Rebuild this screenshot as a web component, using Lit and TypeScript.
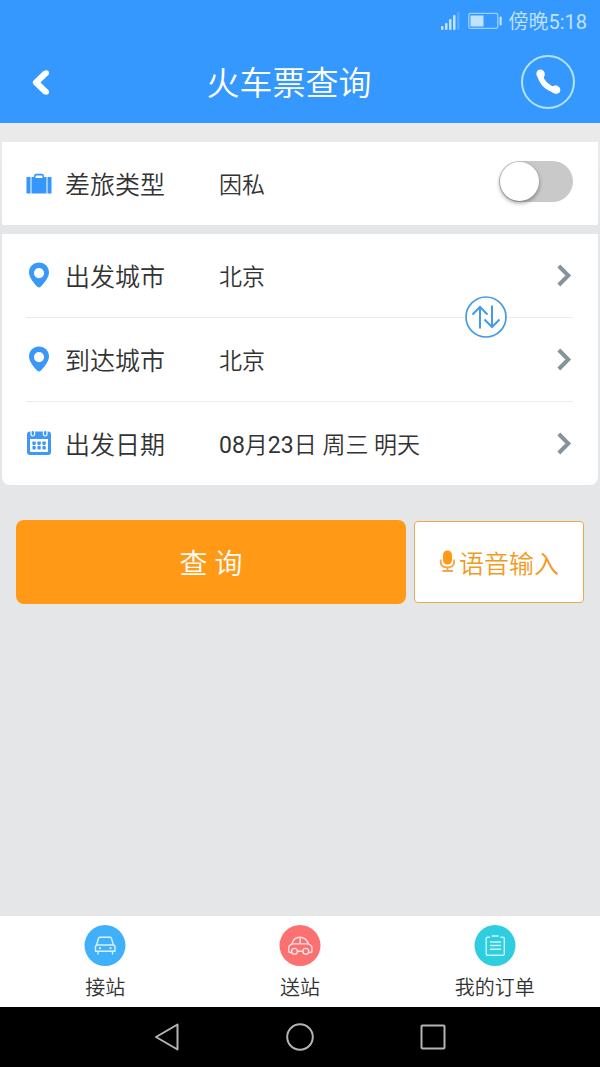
import { LitElement, html, css, svg } from "lit";
import { customElement, property, state } from "lit/decorators.js";

const icons: Record<string, unknown> = {
  bag: svg`
    <g fill="#3596fb">
      <rect x="0.500" y="6" width="4" height="16.500" rx="0.500"/>
      <rect x="21.500" y="6" width="4" height="16.500" rx="0.500"/>
      <path fill-rule="evenodd" d="M5.500 6H8V5Q8 2.800 10.200 2.800H15.800Q18 2.800 18 5V6H20.500V22.500H5.500ZM9.500 7H16.500V5.600Q16.500 4.600 15.500 4.600H10.500Q9.500 4.600 9.500 5.600Z"/>
    </g>`,
  pin: svg`
    <path fill="#3a98f8" fill-rule="evenodd" d="M13 0.500C7.400 0.500 3 4.800 3 10.300C3 16.200 8.400 21.600 11.300 24.800Q13 26.400 14.700 24.800C17.600 21.600 23 16.200 23 10.300C23 4.800 18.600 0.500 13 0.500ZM13 6A5.100 5.100 0 1 1 13 16.200A5.100 5.100 0 1 1 13 6Z"/>`,
  calendar: svg`
    <rect x="1" y="1.500" width="24" height="23.500" rx="3" fill="#3f98f5"/>
    <path d="M4 9H22V21Q22 22 21 22H5Q4 22 4 21Z" fill="#fff"/>
    <g fill="#3f98f5" stroke="#fff" stroke-width="1.200">
      <rect x="5" y="0.500" width="3.600" height="5.500" rx="1.800"/>
      <rect x="17.400" y="0.500" width="3.600" height="5.500" rx="1.800"/>
    </g>
    <g fill="#3f98f5">
      ${[6.4, 11.4, 16.4].map((x) =>
        [11.5, 16].map(
          (y) => svg`<rect x=${x} y=${y} width="3.400" height="3.400" rx="0.800"/>`
        )
      )}
    </g>`,
};

@customElement("status-bar")
class StatusBar extends LitElement {
  static styles = css`
    :host {
      display: flex;
      align-items: center;
      justify-content: flex-end;
      gap: 6px;
      height: 41px;
      padding-right: 13px;
      box-sizing: border-box;
      color: #c0e3ff;
      font-size: 20px;
      line-height: 24px;
    }
    .signal { margin-right: 2px; }
    .time { padding-top: 2px; }
  `;
  render() {
    return html`
      <svg class="signal" width="20" height="20" viewBox="0 0 20 20" aria-hidden="true">
        <g fill="#c0e3ff">
          <rect x="1" y="15" width="2.500" height="4" rx="1"/>
          <rect x="5" y="12" width="2.500" height="7" rx="1"/>
          <rect x="9" y="8" width="2.500" height="11" rx="1"/>
          <rect x="13" y="4" width="2.500" height="15" rx="1"/>
          <rect x="17" y="1" width="2.500" height="18" rx="1" opacity="0.250"/>
        </g>
      </svg>
      <svg width="34" height="18" viewBox="0 0 34 18" aria-hidden="true">
        <rect x="0.800" y="1.300" width="29" height="15" rx="1.500" fill="none" stroke="#9bd0ff" stroke-width="1.300"/>
        <rect x="2.500" y="3.500" width="13" height="11" fill="#c0e3ff"/>
        <rect x="31.500" y="4.500" width="2.200" height="9" rx="1" fill="#c0e3ff"/>
      </svg>
      <span class="time">傍晚5:18</span>
    `;
  }
}

@customElement("form-row")
class FormRow extends LitElement {
  @property() icon = "";
  @property() label = "";
  @property() value = "";
  static styles = css`
    :host { display: block; padding: 0 25px 0 24px; }
    .row {
      display: flex;
      align-items: center;
      width: 100%;
      height: 83px;
      padding: 0;
      border: 0;
      background: none;
      color: #333;
      font: inherit;
      text-align: left;
      cursor: pointer;
    }
    .icon { flex: none; margin: 0 13px 2px 0; }
    .label { width: 154px; padding-top: 4px; font-size: 25px; line-height: 36px; }
    .value { flex: 1; padding-top: 4px; font-size: 23px; line-height: 36px; }
    .chevron { flex: none; }
  `;
  render() {
    return html`
      <button class="row" type="button">
        <svg class="icon" width="26" height="26" viewBox="0 0 26 26" aria-hidden="true">${icons[this.icon]}</svg>
        <span class="label">${this.label}</span>
        <span class="value">${this.value}</span>
        <svg class="chevron" width="16" height="24" viewBox="0 0 16 24" aria-hidden="true">
          <path d="M1.800 2L11.300 11.500L1.800 21" fill="none" stroke="#85939c" stroke-width="4"/>
        </svg>
      </button>
    `;
  }
}

@customElement("app-root")
class AppRoot extends LitElement {
  @state() private business = false;
  @state() private from = "北京";
  @state() private to = "北京";

  static styles = css`
    :host {
      display: flex;
      flex-direction: column;
      min-height: 100vh;
      background: linear-gradient(#eaeaea 140px, #e5e6e8 230px);
      color: #333;
      font-family: Roboto, "Noto Sans CJK SC DemiLight", "Noto Sans CJK SC", sans-serif;
    }
    button { font-family: inherit; cursor: pointer; }
    .top { background: #3498ff; }
    .header {
      display: flex;
      align-items: center;
      justify-content: space-between;
      height: 82px;
      padding: 0 25px;
    }
    .back {
      display: flex;
      padding: 0 6px;
      border: 0;
      background: none;
    }
    .title {
      margin: 0;
      padding-top: 4px;
      color: #fff;
      font-size: 33px;
      line-height: 48px;
      font-weight: 350;
    }
    .call {
      display: flex;
      align-items: center;
      justify-content: center;
      width: 54px;
      height: 54px;
      padding: 0;
      box-sizing: border-box;
      border: 2px solid #b5e4ff;
      border-radius: 50%;
      background: none;
    }
    .main { flex: 1; padding-top: 19px; }
    .card { position: relative; margin: 0 2px 9px; background: #fff; }
    .trip { border-radius: 0 0 8px 8px; }
    .type {
      display: flex;
      align-items: center;
      height: 83px;
      padding: 0 25px 0 24px;
    }
    .type-icon { flex: none; margin-right: 13px; }
    .type-label { width: 154px; padding-top: 4px; font-size: 25px; line-height: 36px; }
    .type-value { flex: 1; padding-top: 4px; font-size: 23px; line-height: 36px; }
    .switch {
      appearance: none;
      display: flex;
      flex: none;
      width: 74px;
      height: 41px;
      margin: 0 0 4px;
      border-radius: 21px;
      background: #c9c9c9;
      cursor: pointer;
    }
    .switch::before {
      content: "";
      width: 39px;
      height: 39px;
      margin: 1px;
      border-radius: 50%;
      background: #fff;
      box-shadow: 0 2px 4px rgba(0, 0, 0, 0.4);
    }
    .switch:checked { justify-content: flex-end; background: #3498ff; }
    .line { height: 1px; margin: 0 25px 0 24px; border: 0; background: #ebebeb; }
    .swap {
      position: absolute;
      top: 62px;
      right: 91px;
      display: flex;
      width: 42px;
      height: 42px;
      padding: 0;
      border: 0;
      border-radius: 50%;
      background: #fff;
    }
    .actions {
      display: flex;
      align-items: center;
      gap: 8px;
      padding: 26px 16px 0;
    }
    .search {
      flex: 1;
      height: 84px;
      border: 0;
      border-radius: 8px;
      background: #ff9916;
      color: #fff;
      font-size: 28px;
    }
    .voice {
      display: flex;
      align-items: center;
      justify-content: center;
      gap: 4px;
      width: 170px;
      height: 82px;
      padding: 0;
      border: 1px solid #eba850;
      border-radius: 4px;
      background: #fff;
      color: #f29a20;
      font-size: 25px;
    }
    .tabs { display: flex; height: 91px; padding: 0 8px; background: #fff; }
    .tab {
      display: flex;
      flex: 1;
      flex-direction: column;
      align-items: center;
      gap: 7px;
      padding-top: 8px;
      color: #333;
      font-size: 20px;
      line-height: 30px;
      text-decoration: none;
    }
    .system { display: flex; height: 60px; padding: 0 100px; background: #000; }
    .key {
      display: flex;
      flex: 1;
      align-items: center;
      justify-content: center;
      padding: 0;
      border: 0;
      background: none;
    }
  `;

  private swap() {
    [this.from, this.to] = [this.to, this.from];
  }

  render() {
    return html`
      <div class="top">
        <status-bar></status-bar>
        <header class="header">
          <button class="back" type="button" aria-label="返回">
            <svg width="20" height="28" viewBox="0 0 20 28" aria-hidden="true">
              <path d="M14.800 5L5 14.500L14.800 24" fill="none" stroke="#fff" stroke-width="6.200" stroke-linejoin="round" stroke-linecap="butt"/>
              <circle cx="15.200" cy="5" r="2.800" fill="#fff"/>
              <circle cx="15.200" cy="24" r="2.800" fill="#fff"/>
            </svg>
          </button>
          <h1 class="title">火车票查询</h1>
          <button class="call" type="button" aria-label="电话">
            <svg width="28" height="28" viewBox="0 0 28 28" aria-hidden="true">
              <path d="M6 6.500C7 14 13.500 20.500 21.500 22" fill="none" stroke="#fff" stroke-width="5.600"/>
              <ellipse cx="6.600" cy="6" rx="4.200" ry="4.600" transform="rotate(-20 6.600 6)" fill="#fff"/>
              <ellipse cx="21.800" cy="21.600" rx="4.600" ry="4.200" transform="rotate(20 21.800 21.600)" fill="#fff"/>
            </svg>
          </button>
        </header>
      </div>

      <main class="main">
        <section class="card type">
          <svg class="type-icon" width="26" height="26" viewBox="0 0 26 26" aria-hidden="true">${icons.bag}</svg>
          <label class="type-label" for="type">差旅类型</label>
          <span class="type-value">${this.business ? "因公" : "因私"}</span>
          <input class="switch" id="type" type="checkbox" .checked=${this.business}
            @change=${(e: Event) => (this.business = (e.target as HTMLInputElement).checked)}>
        </section>

        <section class="card trip">
          <form-row icon="pin" label="出发城市" .value=${this.from}></form-row>
          <hr class="line">
          <form-row icon="pin" label="到达城市" .value=${this.to}></form-row>
          <hr class="line">
          <form-row icon="calendar" label="出发日期" value="08月23日 周三 明天"></form-row>
          <button class="swap" type="button" aria-label="交换城市" @click=${this.swap}>
            <svg width="42" height="42" viewBox="0 0 42 42" aria-hidden="true">
              <g fill="none" stroke="#459be8" stroke-width="2">
                <circle cx="21" cy="21" r="20" stroke-width="1.700"/>
                <path d="M15 32.500V11.500M7.500 18.500L15 11L22.500 18.500"/>
                <path d="M27 9.500V31M19.500 23.500L27 31L34.500 23.500"/>
              </g>
            </svg>
          </button>
        </section>

        <div class="actions">
          <button class="search" type="button">查 询</button>
          <button class="voice" type="button">
            <svg width="16" height="24" viewBox="0 0 16 24" aria-hidden="true">
              <rect x="4" y="0.500" width="9" height="14" rx="4.500" fill="#ff9916"/>
              <path d="M1.700 9.500V11.500Q1.700 17.500 8.500 17.500Q15.200 17.500 15.200 11.500V9.500M8.500 17.500V21M3.500 21H14" fill="none" stroke="#f0a848" stroke-width="1.800"/>
            </svg>
            <span>语音输入</span>
          </button>
        </div>
      </main>

      <nav class="tabs">
        <a class="tab" href="#pickup">
          <svg width="42" height="42" viewBox="0 0 42 42" aria-hidden="true">
            <circle cx="21" cy="21.500" r="20.500" fill="#41b0fa"/>
            <g fill="none" stroke="#d9f1ff" stroke-width="1.400" stroke-linejoin="round" stroke-linecap="round">
              <path d="M12.500 21L14.600 14.300Q15 13.300 16 13.300H26Q27 13.300 27.400 14.300L29.500 21"/>
              <path d="M11.500 23Q11.500 21 13.500 21H29Q31 21 31 23V27.300H11.500Z"/>
              <path d="M14 27.500V30M28.500 27.500V30"/>
            </g>
            <circle cx="16" cy="24.200" r="1.100" fill="#d9f1ff"/>
            <circle cx="26.500" cy="24.200" r="1.100" fill="#d9f1ff"/>
          </svg>
          <span>接站</span>
        </a>
        <a class="tab" href="#dropoff">
          <svg width="42" height="42" viewBox="0 0 42 42" aria-hidden="true">
            <circle cx="21" cy="21.500" r="20.500" fill="#fb7172"/>
            <g fill="none" stroke="#ffe1e1" stroke-width="1.400" stroke-linejoin="round" stroke-linecap="round">
              <path d="M12.500 28.500H11Q9.700 28.500 9.700 27V24Q9.700 21.300 13 20.100Q14.500 13.300 20.800 13.300Q27 13.300 29.500 20.100Q33 21.100 33 24V27Q33 28.500 31.500 28.500H29.800M18.500 27.300H23.800"/>
              <path d="M13 19.900H29.500M21.200 13.500V19.900"/>
              <circle cx="15.500" cy="27.300" r="2.900"/>
              <circle cx="26.800" cy="27.300" r="2.900"/>
            </g>
          </svg>
          <span>送站</span>
        </a>
        <a class="tab" href="#orders">
          <svg width="42" height="42" viewBox="0 0 42 42" aria-hidden="true">
            <circle cx="21" cy="21.500" r="20.500" fill="#2fcde0"/>
            <g fill="none" stroke="#c6f8fc" stroke-width="1.400" stroke-linecap="round">
              <path d="M15.500 13.300H13.500Q12.200 13.300 12.200 14.500V30Q12.200 31.300 13.500 31.300H29Q30.300 31.300 30.300 30V14.500Q30.300 13.300 29 13.300H27"/>
              <path d="M18.200 12H24.300M16.500 18H26.500M16.500 21.500H26.500M16.500 25.300H26.500"/>
            </g>
          </svg>
          <span>我的订单</span>
        </a>
      </nav>

      <div class="system">
        <button class="key" type="button" aria-label="后退">
          <svg width="28" height="30" viewBox="0 0 28 30" aria-hidden="true">
            <path d="M24.500 2.500V27.500L3 15Z" fill="none" stroke="#b4b4b4" stroke-width="2" stroke-linejoin="round"/>
          </svg>
        </button>
        <button class="key" type="button" aria-label="主页">
          <svg width="28" height="28" viewBox="0 0 28 28" aria-hidden="true">
            <circle cx="14" cy="14" r="12.800" fill="none" stroke="#b4b4b4" stroke-width="2"/>
          </svg>
        </button>
        <button class="key" type="button" aria-label="最近任务">
          <svg width="26" height="26" viewBox="0 0 26 26" aria-hidden="true">
            <rect x="1.500" y="1.500" width="23" height="23" rx="1" fill="none" stroke="#b4b4b4" stroke-width="2"/>
          </svg>
        </button>
      </div>
    `;
  }
}
